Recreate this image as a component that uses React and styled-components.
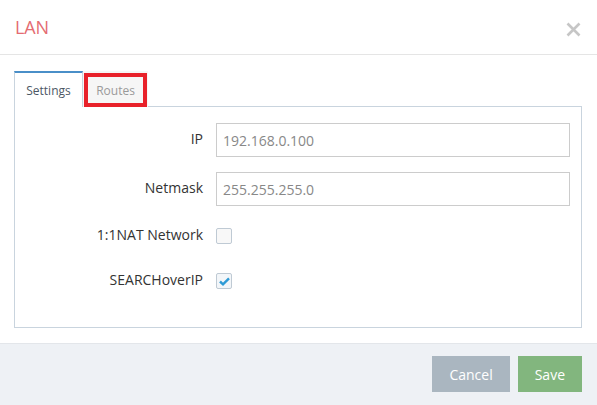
import React from 'react';
import styled, { createGlobalStyle } from 'styled-components';

const GlobalStyle = createGlobalStyle`
    html, body {
        margin: 0;
        padding: 0;
        background: #FFFFFF;
        font-family: "Open Sans", "Noto Sans", sans-serif;
    }
    * {
        box-sizing: border-box;
    }
`;

// modal frame
const Modal = styled.div`
    width: 597px;
    height: 405px;
    display: flex;
    flex-direction: column;
    background: #FFFFFF;
`;

const Header = styled.div`
    height: 55px;
    display: flex;
    align-items: center;
    justify-content: space-between;
    padding: 0 16px 0 15px;
    border-bottom: 1px solid #E5E5E5;
    h1 {
        margin: 0;
        font-size: 18px;
        font-weight: 400;
        color: #E46C72;
        letter-spacing: -0.2px;
    }
`;

const CloseButton = styled.button`
    border: 0;
    background: none;
    padding: 0;
    width: 15px;
    height: 15px;
    margin-top: 5px;
    cursor: pointer;
    display: flex;
`;

const Body = styled.div`
    flex: 1;
    padding: 16px 15px 15px 14px;
`;

// tabs
const TabBar = styled.div`
    display: flex;
    position: relative;
    z-index: 1;
`;

const Tab = styled.div`
    height: 36px;
    padding: 0 12px;
    display: flex;
    align-items: center;
    font-size: 12px;
    margin-bottom: -1px;
    color: ${p => (p.$active ? '#4C5765' : '#9A9A9A')};
    background: ${p => (p.$active ? '#FFFFFF' : '#F6F6F6')};
    border: 1px solid ${p => (p.$active ? '#C9D4DE' : 'transparent')};
    border-top: 2px solid ${p => (p.$active ? '#4A8FC8' : 'transparent')};
    border-bottom: 0;
    width: ${p => p.$width}px;
    justify-content: center;
    box-shadow: ${p => (p.$marked ? 'inset 0 0 0 4px #E8212A' : 'none')};
    cursor: pointer;
`;

const Panel = styled.div`
    border: 1px solid #C9D4DE;
    padding: 16px 11px 31px 0;
`;

const Form = styled.div`
    display: grid;
    grid-template-columns: 188px 1fr;
    column-gap: 13px;
    row-gap: 15px;
`;

const Label = styled.label`
    height: ${p => p.$h}px;
    display: flex;
    align-items: center;
    justify-content: flex-end;
    padding-bottom: 3px;
    font-size: 14px;
    color: #333333;
`;

const Field = styled.div`
    height: ${p => p.$h}px;
    display: flex;
    align-items: center;
`;

const Input = styled.input`
    width: 100%;
    height: 34px;
    border: 1px solid #CCCCCC;
    padding: 0 6px;
    font-family: inherit;
    font-size: 14px;
    color: #888888;
    outline: none;
`;

const Check = styled.span`
    width: 16px;
    height: 16px;
    border: 1px solid #BFCAD4;
    border-radius: 2px;
    background: ${p => (p.$on ? '#F3F6F9' : '#F8F8F8')};
    display: flex;
    align-items: center;
    justify-content: center;
`;

// footer
const Footer = styled.div`
    height: 62px;
    border-top: 1px solid #E3E6EA;
    background: #EEF1F5;
    display: flex;
    justify-content: flex-end;
    align-items: flex-start;
    gap: 8px;
    padding: 12px 15px 0 0;
`;

const Button = styled.button`
    height: 36px;
    padding: 0 17px;
    border: 0;
    font-family: inherit;
    font-size: 14px;
    color: #FFFFFF;
    background: ${p => p.$bg};
    cursor: pointer;
`;

const rows = [
    { label: 'IP', value: '192.168.0.100' },
    { label: 'Netmask', value: '255.255.255.0' },
    { label: '1:1NAT Network', checked: false },
    { label: 'SEARCHoverIP', checked: true },
];

export default function App() {
    return (
        <>
            <GlobalStyle />
            <Modal>
                <Header>
                    <h1>LAN</h1>
                    <CloseButton aria-label="close">
                        <svg width="15" height="15" viewBox="0 0 15 15">
                            <path d="M1.5 1.5 L13.5 13.5 M13.5 1.5 L1.5 13.5" stroke="#C6C6C6" strokeWidth="2.6" />
                        </svg>
                    </CloseButton>
                </Header>
                <Body>
                    <TabBar>
                        <Tab $active $width={69}>Settings</Tab>
                        <Tab $marked $width={65}>Routes</Tab>
                    </TabBar>
                    <Panel>
                        <Form>
                            {rows.map(r => {
                                const h = r.value !== undefined ? 34 : 30;
                                return (
                                    <React.Fragment key={r.label}>
                                        <Label $h={h}>{r.label}</Label>
                                        <Field $h={h}>
                                            {r.value !== undefined ? (
                                                <Input defaultValue={r.value} />
                                            ) : (
                                                <Check $on={r.checked}>
                                                    {r.checked && (
                                                        <svg width="11" height="9" viewBox="0 0 11 9">
                                                            <path d="M1 4.5 L4 7.3 L10 1.3" fill="none" stroke="#2E9BD6" strokeWidth="2.4" />
                                                        </svg>
                                                    )}
                                                </Check>
                                            )}
                                        </Field>
                                    </React.Fragment>
                                );
                            })}
                        </Form>
                    </Panel>
                </Body>
                <Footer>
                    <Button $bg="#AAB6C0">Cancel</Button>
                    <Button $bg="#82B67E">Save</Button>
                </Footer>
            </Modal>
        </>
    );
}
